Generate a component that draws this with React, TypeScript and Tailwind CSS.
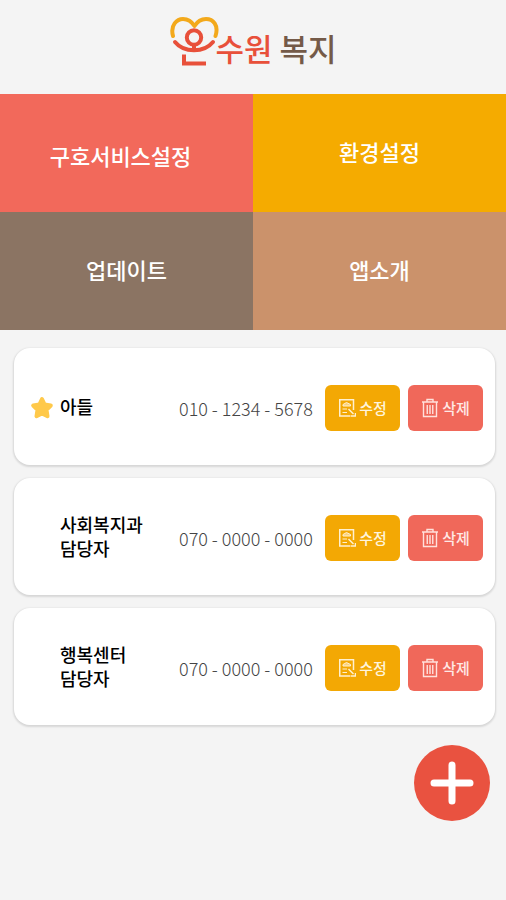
import type { ReactNode } from "react";

type Contact = {
  name: string[];
  phone: string;
  favorite?: boolean;
};

const contacts: Contact[] = [
  { name: ["아들"], phone: "010 - 1234 - 5678", favorite: true },
  { name: ["사회복지과", "담당자"], phone: "070 - 0000 - 0000" },
  { name: ["행복센터", "담당자"], phone: "070 - 0000 - 0000" },
];

const menu = [
  { label: "구호서비스설정", style: "bg-[#f2695b] pt-2 pr-3 pb-1" },
  { label: "환경설정", style: "bg-[#f5ab00] pb-1" },
  { label: "업데이트", style: "bg-[#8b7463] pb-1" },
  { label: "앱소개", style: "bg-[#cb926b] pb-1" },
];

function LogoMark() {
  return (
    <svg
      width="50"
      height="52"
      viewBox="0 0 50 52"
      fill="none"
      strokeWidth="4"
      className="shrink-0"
      aria-hidden="true"
    >
      <path
        d="M4 20C1 9 8 3 14 3C19 3 23 6 25.500 10C28 6 32 3 37 3C44 3 50 9 46.500 20"
        stroke="#f3a91b"
        strokeLinecap="round"
        strokeLinejoin="round"
      />
      <g stroke="#e8503a">
        <circle cx="25" cy="21.500" r="7.200" />
        <path d="M6 26C15 37 35 37 44 26" strokeLinecap="round" />
        <path d="M25 28V35" />
        <path d="M15 38.500V47.500H37" />
      </g>
    </svg>
  );
}

function StarIcon() {
  return (
    <svg width="24" height="24" viewBox="0 0 24 24" role="img" aria-label="즐겨찾기">
      <path
        d="M12 3L14.600 8.500L20.800 9.500L16.500 13.900L17.500 20.200L12 17.500L6.500 20.200L7.500 13.900L3.200 9.500L9.400 8.500Z"
        fill="#ffc94a"
        stroke="#ffc94a"
        strokeWidth="4"
        strokeLinejoin="round"
      />
    </svg>
  );
}

function EditIcon() {
  return (
    <svg
      width="18"
      height="20"
      viewBox="0 0 18 20"
      fill="none"
      stroke="#fff0d0"
      strokeWidth="1.500"
      aria-hidden="true"
    >
      <path d="M15.500 12V1.750H1.750V18H12" />
      <path d="M5 8V6.500L8.500 4.500L12.500 6.500V8Z" fill="#fff0d0" fillOpacity="0.600" strokeWidth="1" />
      <path d="M4.500 11H9M4.500 14.500H9" strokeWidth="1.200" />
      <path d="M10.500 11L15.500 16" />
      <path d="M12.500 18H17.500V15" />
    </svg>
  );
}

function TrashIcon() {
  return (
    <svg
      width="18"
      height="20"
      viewBox="0 0 18 20"
      fill="none"
      stroke="#ffe1dc"
      strokeWidth="1.400"
      aria-hidden="true"
    >
      <path d="M1 4H17M6 4V1.500H12V4M2.500 4V18.500H15.500V4M6.250 7V16M9 7V16M11.750 7V16" />
    </svg>
  );
}

function ActionButton({
  label,
  icon,
  className,
}: {
  label: string;
  icon: ReactNode;
  className: string;
}) {
  return (
    <button
      type="button"
      className={`flex h-[46px] w-[75px] shrink-0 items-center justify-center gap-[3px] rounded-md text-[15px] font-medium ${className}`}
    >
      {icon}
      <span>{label}</span>
    </button>
  );
}

function ContactCard({ contact }: { contact: Contact }) {
  return (
    <li className="flex h-[117px] items-center rounded-2xl bg-white pt-[3px] pr-3 pl-4 shadow-[0_1px_2px_1px_rgba(0,0,0,0.12)]">
      <div className="flex w-[30px] shrink-0">{contact.favorite && <StarIcon />}</div>
      <h2 className="min-w-[119px] flex-1 pb-1 text-[18px] leading-6 font-medium text-black">
        {contact.name.map((line) => (
          <span key={line} className="block">
            {line}
          </span>
        ))}
      </h2>
      <p className="w-[146px] shrink-0 text-[18px] font-light whitespace-nowrap text-[#444]">
        {contact.phone}
      </p>
      <div className="flex gap-2">
        <ActionButton label="수정" icon={<EditIcon />} className="bg-[#f3a804] text-[#fff4dc]" />
        <ActionButton label="삭제" icon={<TrashIcon />} className="bg-[#f0685a] text-[#ffe9e5]" />
      </div>
    </li>
  );
}

export default function App() {
  return (
    <div className="min-h-screen bg-[#f4f4f4] font-['Noto_Sans_CJK_KR',sans-serif]">
      <header className="flex h-[94px] items-start justify-center pt-4">
        <h1 className="flex items-start" aria-label="온수원 복지">
          <LogoMark />
          <span className="-ml-1 pt-3 text-[31px] leading-10 font-medium whitespace-pre text-[#e8503a]">
            수원 <span className="text-[#745a48]">복지</span>
          </span>
        </h1>
      </header>

      <nav className="grid grid-cols-2">
        {menu.map((item) => (
          <button
            key={item.label}
            type="button"
            className={`flex h-[118px] items-center justify-center text-[22px] font-medium text-white ${item.style}`}
          >
            {item.label}
          </button>
        ))}
      </nav>

      <main>
        <ul className="flex flex-col gap-[13px] pt-[18px] pr-[11px] pl-[14px]">
          {contacts.map((contact) => (
            <ContactCard key={contact.name.join(" ")} contact={contact} />
          ))}
        </ul>
        <div className="flex justify-end pt-5 pr-4">
          <button
            type="button"
            aria-label="연락처 추가"
            className="flex size-[76px] items-center justify-center rounded-full bg-[#e95240]"
          >
            <svg
              width="44"
              height="44"
              viewBox="0 0 44 44"
              stroke="#fff"
              strokeWidth="7"
              strokeLinecap="round"
              aria-hidden="true"
            >
              <path d="M22 4V40M4 22H40" />
            </svg>
          </button>
        </div>
      </main>
    </div>
  );
}
